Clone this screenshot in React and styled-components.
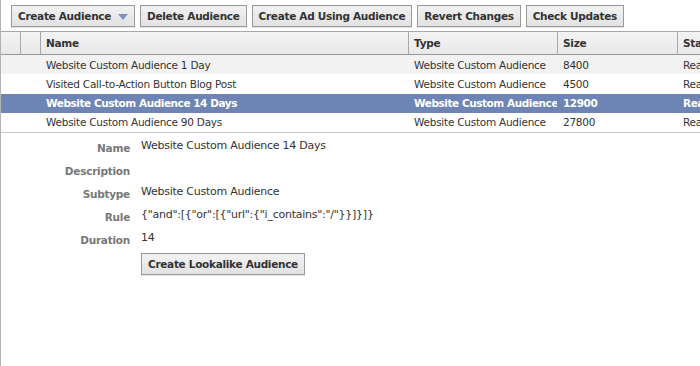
import styled, { createGlobalStyle } from "styled-components";

const GlobalStyle = createGlobalStyle`
  html, body {
    margin: 0;
    padding: 0;
    background: #fff;
  }
  body {
    font-family: "DejaVu Sans", "Liberation Sans", sans-serif;
    font-size: 10.5px;
    letter-spacing: -0.25px;
    color: #333;
  }
`;

const audiences = [
  { name: "Website Custom Audience 1 Day", type: "Website Custom Audience", size: 8400, status: "Ready" },
  { name: "Visited Call-to-Action Button Blog Post", type: "Website Custom Audience", size: 4500, status: "Ready" },
  { name: "Website Custom Audience 14 Days", type: "Website Custom Audience", size: 12900, status: "Ready", selected: true },
  { name: "Website Custom Audience 90 Days", type: "Website Custom Audience", size: 27800, status: "Ready" },
];

const details = [
  { label: "Name", value: "Website Custom Audience 14 Days" },
  { label: "Description", value: "" },
  { label: "Subtype", value: "Website Custom Audience" },
  { label: "Rule", value: '{"and":[{"or":[{"url":{"i_contains":"/"}}]}]}' },
  { label: "Duration", value: "14" },
];

const App = () => {
  return (
    <Page>
      <GlobalStyle />
      <Toolbar>
        <Button>
          Create Audience
          <Caret />
        </Button>
        <Button>Delete Audience</Button>
        <Button>Create Ad Using Audience</Button>
        <Button>Revert Changes</Button>
        <Button>Check Updates</Button>
      </Toolbar>

      <Table>
        <HeaderRow>
          <HeadCell />
          <HeadCell />
          <HeadCell>Name</HeadCell>
          <HeadCell>Type</HeadCell>
          <HeadCell>Size</HeadCell>
          <HeadCell>Status</HeadCell>
        </HeaderRow>
        {audiences.map((a, i) => (
          <Row key={a.name} $striped={i % 2 === 0} $selected={a.selected}>
            <Cell />
            <Cell />
            <Cell>{a.name}</Cell>
            <Cell>{a.type}</Cell>
            <Cell>{a.size}</Cell>
            <Cell>{a.status}</Cell>
          </Row>
        ))}
      </Table>

      <Details>
        {details.map((d) => (
          <DetailRow key={d.label}>
            <Label>{d.label}</Label>
            <Value>{d.value}</Value>
          </DetailRow>
        ))}
        <DetailRow>
          <Label />
          <Value>
            <Button>Create Lookalike Audience</Button>
          </Value>
        </DetailRow>
      </Details>
    </Page>
  );
};

export default App;

const Page = styled.div`
  width: 699px;
  height: 366px;
  border-left: 1px solid #b3b3b3;
  overflow: hidden;
  background: #fff;
`;

const Toolbar = styled.div`
  display: flex;
  gap: 5px;
  padding: 5px 0 0 10px;
  height: 26px;
`;

const Button = styled.button`
  display: inline-flex;
  align-items: center;
  gap: 7px;
  height: 22px;
  padding: 0 6px;
  border: 1px solid #999;
  background: linear-gradient(#f2f2f2, #e2e2e2);
  box-shadow: 0 1px 0 #e6e6e6;
  font-family: "DejaVu Sans", "Liberation Sans", sans-serif;
  font-size: 10.5px;
  letter-spacing: -0.3px;
  font-weight: bold;
  color: #333;
  white-space: nowrap;
  cursor: pointer;
`;

const Caret = styled.span`
  width: 0;
  height: 0;
  border-left: 5px solid transparent;
  border-right: 5px solid transparent;
  border-top: 6px solid #7d92bf;
  margin-top: 1px;
`;

const Table = styled.div`
  width: 776px;
  border-bottom: 1px solid #c8c8c8;
`;

const columns = "19px 20px 368px 149px 120px 100px";

const HeaderRow = styled.div`
  display: grid;
  grid-template-columns: ${columns};
  height: 22px;
  border-top: 1px solid #a8a8a8;
  border-bottom: 1px solid #9a9a9a;
  background: linear-gradient(#f3f3f3, #e9e9e9);
`;

const HeadCell = styled.div`
  display: flex;
  align-items: center;
  padding-left: 5px;
  font-weight: bold;
  color: #333;
  white-space: nowrap;
  overflow: hidden;

  & + & {
    border-left: 1px solid #a8a8a8;
  }
`;

const Row = styled.div`
  display: grid;
  grid-template-columns: ${columns};
  height: 19.25px;
  background: ${(p) => (p.$selected ? "#6d84b4" : p.$striped ? "#f2f2f2" : "#fff")};
  color: ${(p) => (p.$selected ? "#fff" : "#333")};
  font-weight: ${(p) => (p.$selected ? "bold" : "normal")};
  letter-spacing: ${(p) => (p.$selected ? "-0.45px" : "-0.25px")};
`;

const Cell = styled.div`
  display: flex;
  align-items: center;
  padding-left: 6px;
  white-space: nowrap;
  overflow: hidden;
`;

const Details = styled.div`
  padding-top: 4px;
`;

const DetailRow = styled.div`
  display: grid;
  grid-template-columns: 129px 1fr;
  column-gap: 11px;
  min-height: 23px;
`;

const Label = styled.div`
  text-align: right;
  font-weight: bold;
  color: #777;
  font-size: 10.5px;
  padding-top: 5px;
`;

const Value = styled.div`
  font-size: 11px;
  color: #333;
  line-height: 16px;
  padding-top: 1px;
`;
